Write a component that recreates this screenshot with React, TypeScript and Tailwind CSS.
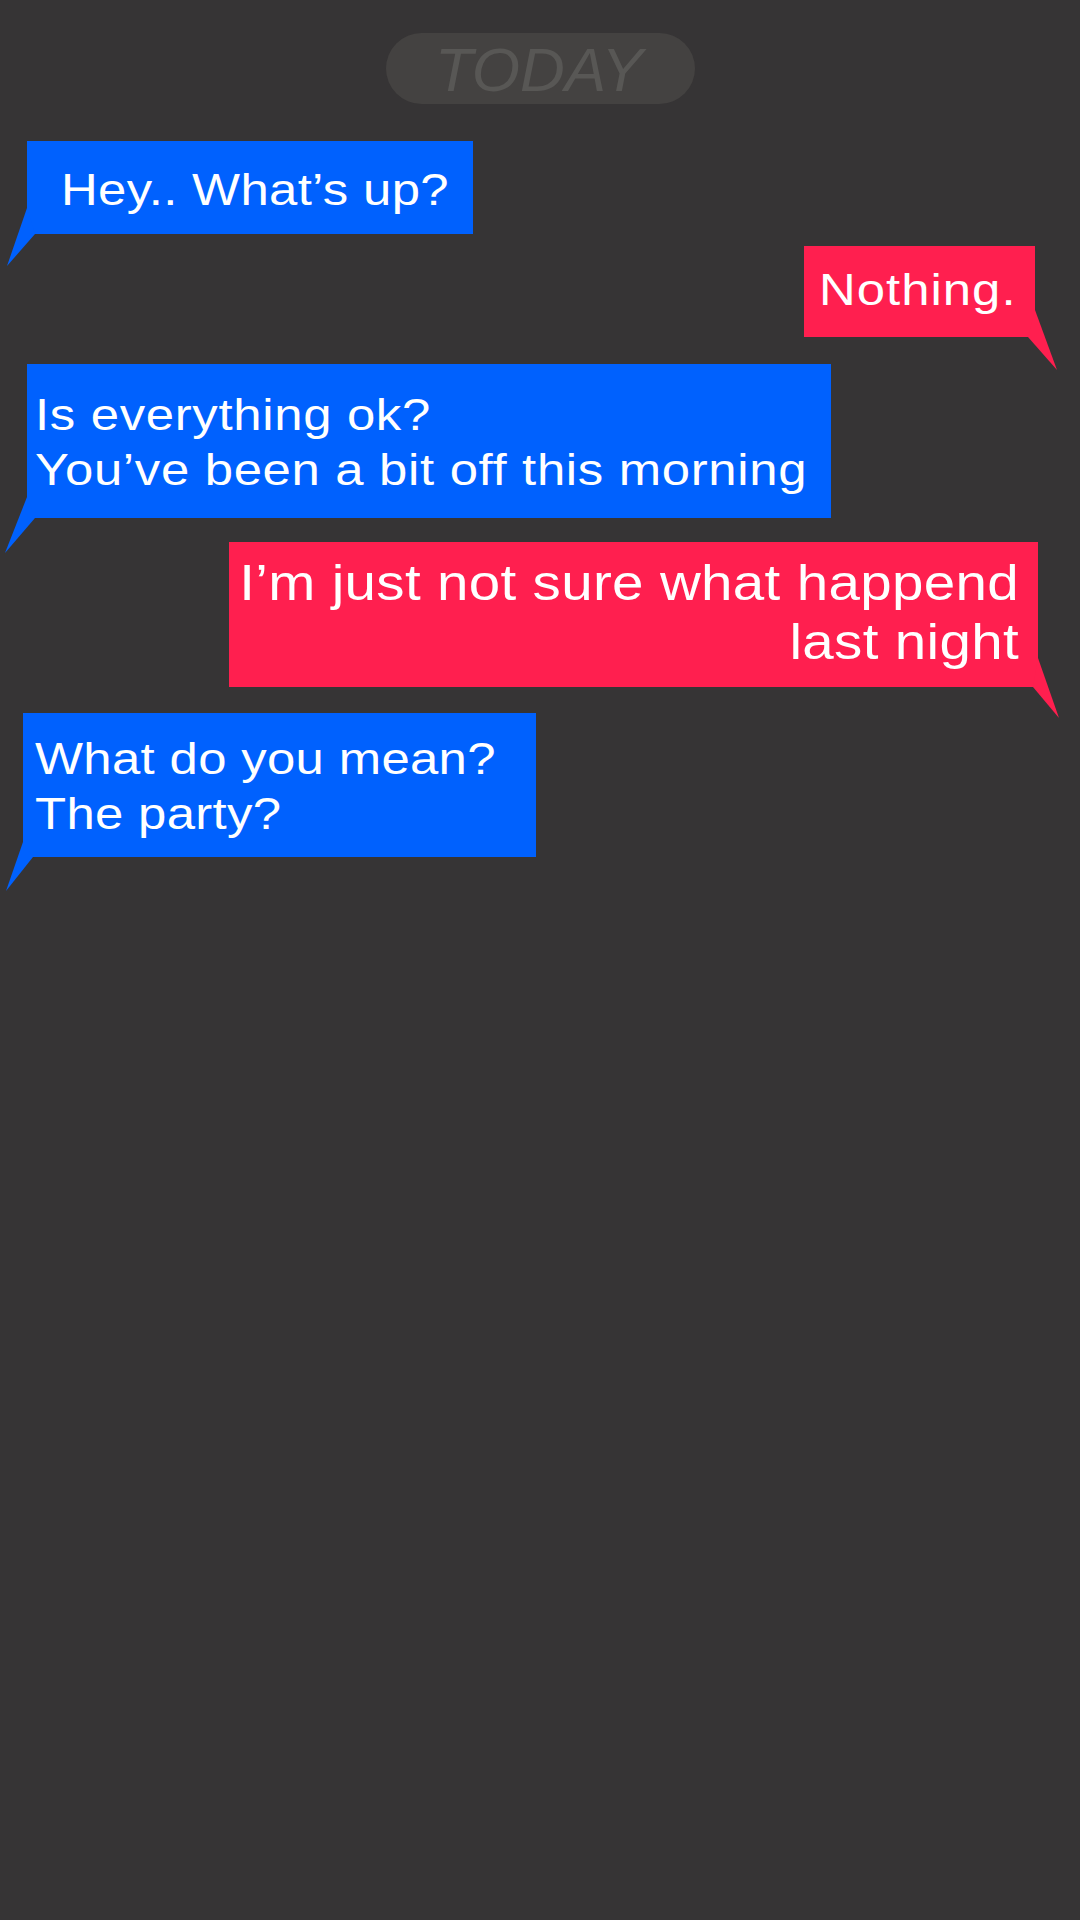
import type { ReactNode } from "react";

const BLUE = "#0061fe";
const RED = "#ff1f4f";

type TailProps = {
  side: "left" | "right";
  color: string;
  top: number;
  w: number;
  h: number;
  points: string;
  inset: number;
};

// little speech-bubble pointer hanging off the bubble's bottom corner
function Tail({ side, color, top, w, h, points, inset }: TailProps) {
  const pos = side === "left" ? { left: -(w - inset), top } : { right: -(w - inset), top };
  return (
    <svg
      className="absolute"
      style={pos}
      width={w}
      height={h}
      viewBox={`0 0 ${w} ${h}`}
      aria-hidden="true"
    >
      <polygon points={points} fill={color} />
    </svg>
  );
}

function Bubble({
  className,
  textClass = "origin-left",
  tail,
  children,
}: {
  className: string;
  textClass?: string;
  tail: ReactNode;
  children: ReactNode;
}) {
  return (
    <div className={`relative text-white font-['Liberation_Sans',Arial,sans-serif] ${className}`}>
      {/* the type in the mock is a touch wider than Arial */}
      <div className={`scale-x-[1.13] whitespace-nowrap ${textClass}`}>{children}</div>
      {tail}
    </div>
  );
}

export default function App() {
  return (
    <div className="min-h-screen w-full bg-[#363435] flex flex-col pt-[33px]">
      {/* date pill */}
      <div className="mx-auto w-[309px] h-[71px] rounded-full bg-[#444241] flex items-center justify-center">
        <span className="font-['Liberation_Sans',Arial,sans-serif] italic text-[62px] leading-[71px] pt-[2px] pr-[2px] text-[#585755]">
          TODAY
        </span>
      </div>

      <Bubble
        className="self-start ml-[27px] mt-[37px] w-[446px] h-[93px] bg-[#0061fe] pl-[34px] pt-[21px] text-[45px] leading-[55px] tracking-[0.3px]"
        tail={<Tail side="left" color={BLUE} top={67} w={28} h={58} inset={8} points="20,0 0,58 28,26" />}
      >
        Hey.. What’s up?
      </Bubble>

      <Bubble
        className="self-end mr-[45px] mt-[12px] w-[231px] h-[91px] bg-[#ff1f4f] pl-[15px] pt-[16px] text-[45px] leading-[55px] tracking-[0.9px]"
        tail={<Tail side="right" color={RED} top={64} w={29} h={60} inset={7} points="7,0 29,60 0,27" />}
      >
        Nothing.
      </Bubble>

      <Bubble
        className="self-start ml-[27px] mt-[27px] w-[804px] h-[154px] bg-[#0061fe] pl-[8px] pt-[23px] text-[45px] leading-[55px] tracking-[0.6px]"
        tail={<Tail side="left" color={BLUE} top={133} w={30} h={56} inset={8} points="22,0 0,56 30,21" />}
      >
        <div>Is everything ok?</div>
        <div>You’ve been a bit off this morning</div>
      </Bubble>

      <Bubble
        className="self-end mr-[42px] mt-[24px] w-[809px] h-[145px] bg-[#ff1f4f] pr-[19px] pt-[12px] text-right text-[50px] leading-[59px] tracking-[0.3px]"
        textClass="origin-right"
        tail={<Tail side="right" color={RED} top={116} w={26} h={60} inset={5} points="5,0 26,60 0,29" />}
      >
        <div>I’m just not sure what happend</div>
        <div>last night</div>
      </Bubble>

      <Bubble
        className="self-start ml-[23px] mt-[26px] w-[513px] h-[144px] bg-[#0061fe] pl-[12px] pt-[18px] text-[45px] leading-[55px] tracking-[0.3px]"
        tail={<Tail side="left" color={BLUE} top={129} w={27} h={49} inset={10} points="17,0 0,49 27,15" />}
      >
        <div>What do you mean?</div>
        <div>The party?</div>
      </Bubble>
    </div>
  );
}
